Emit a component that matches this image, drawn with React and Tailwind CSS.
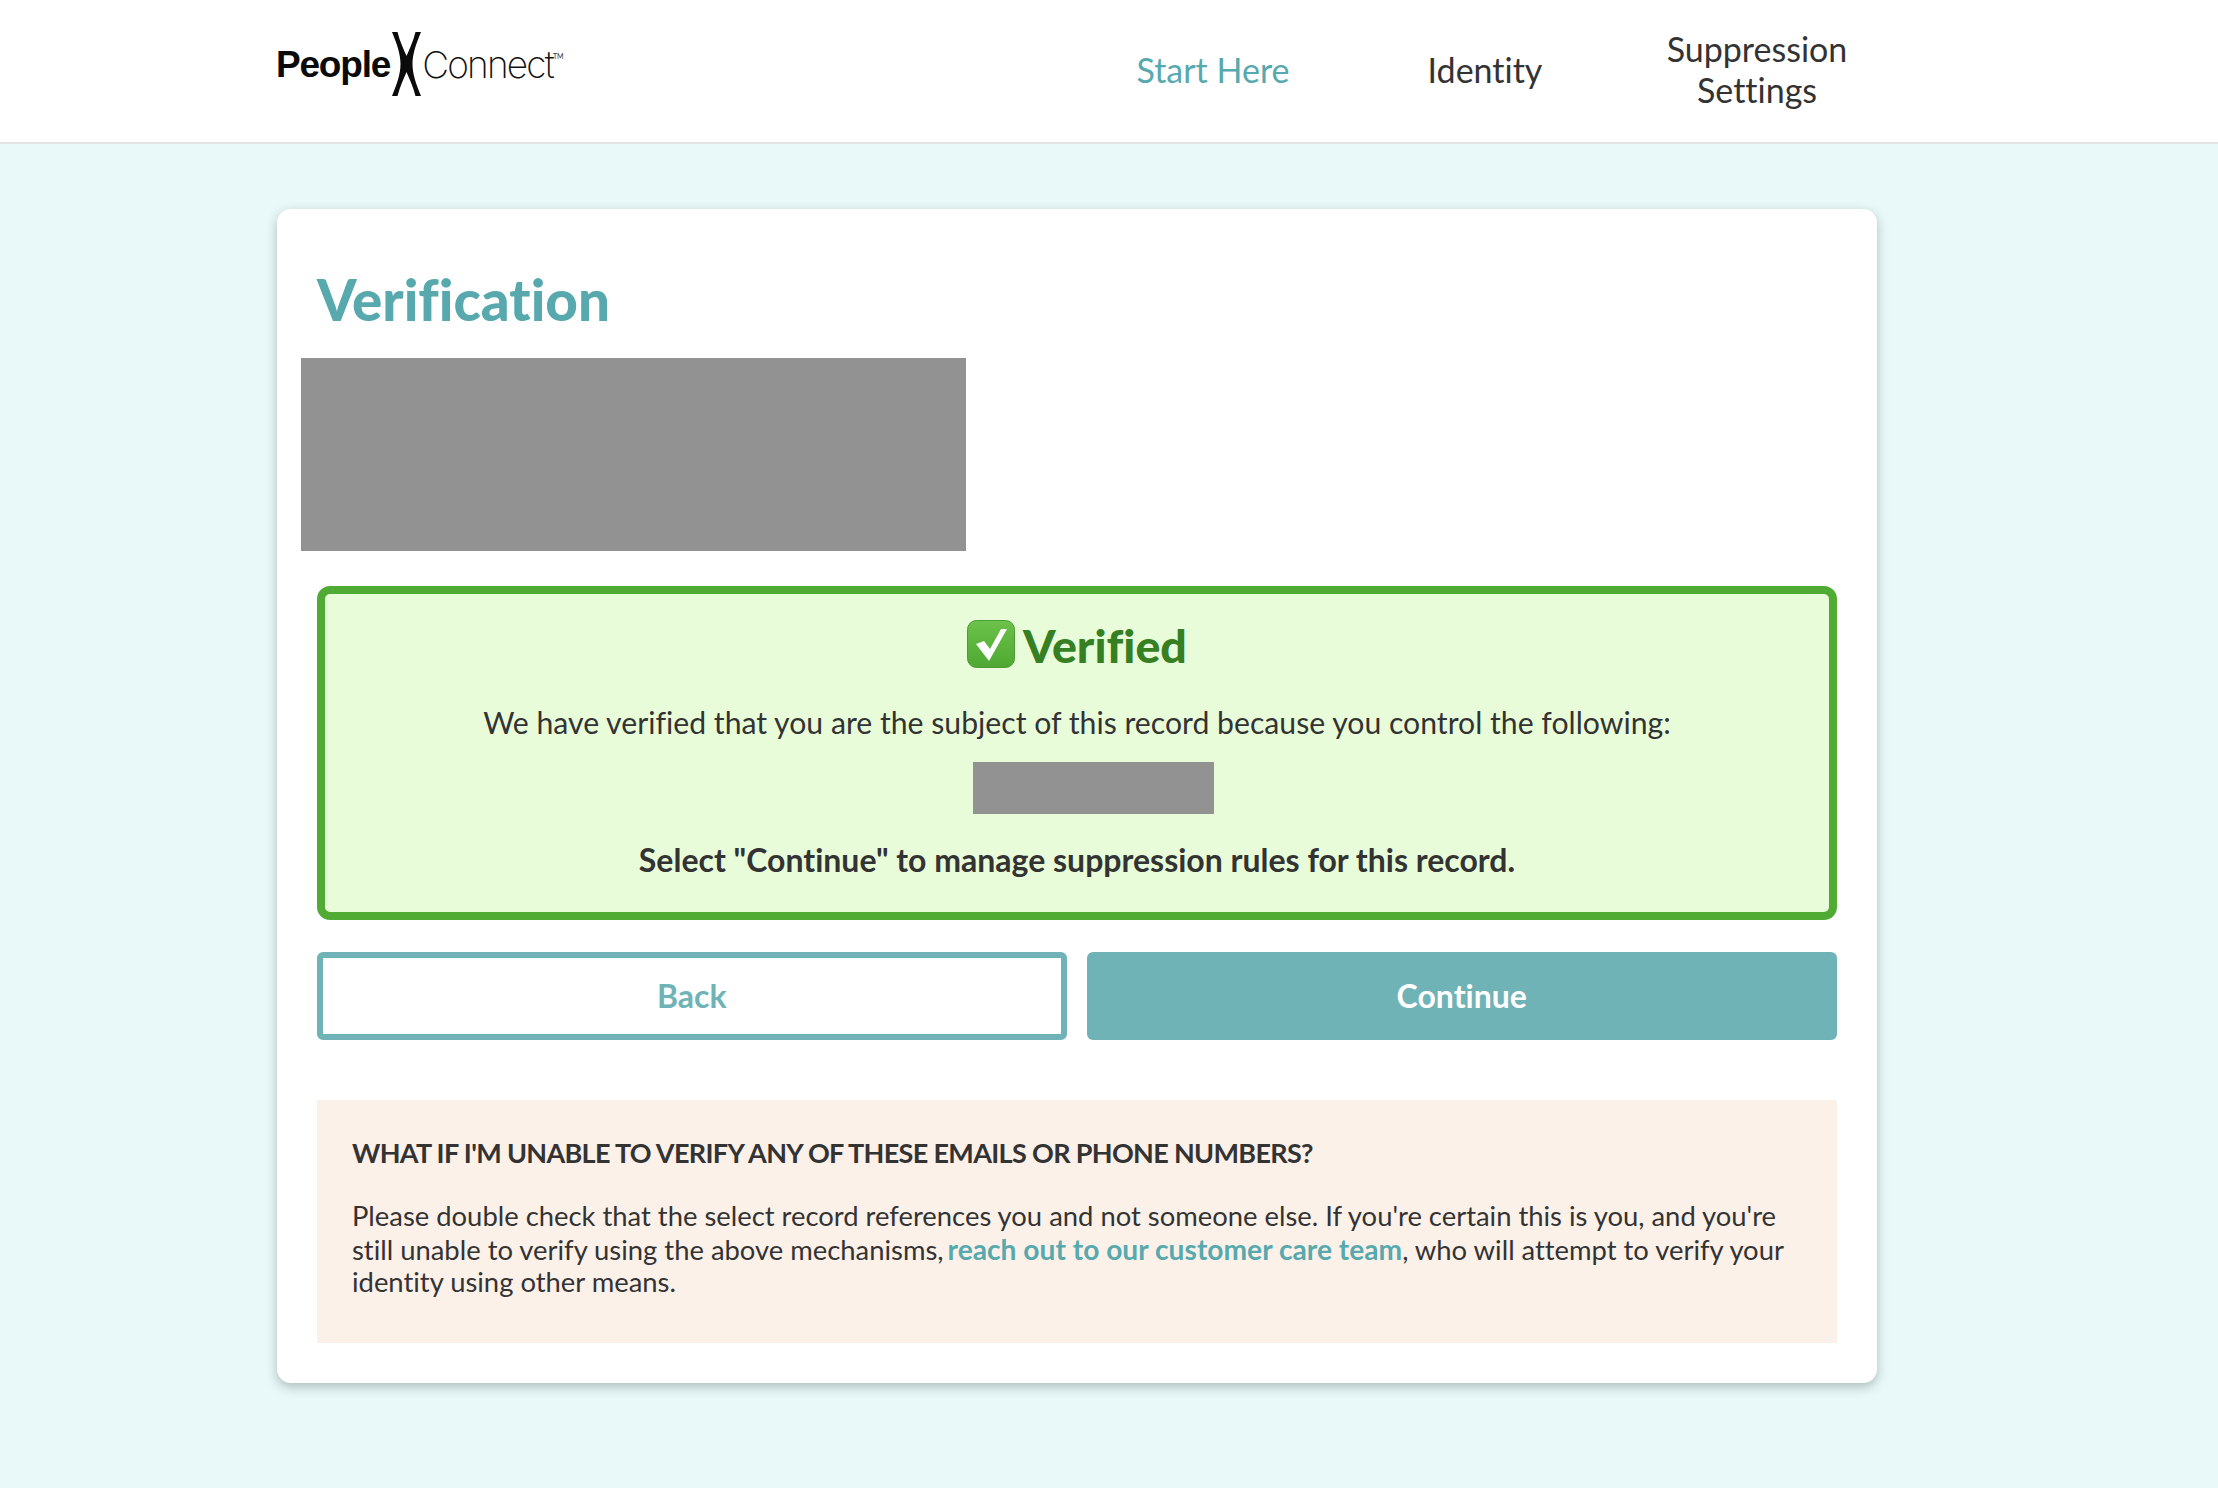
import React from "react";

const LogoX = () => (
  <svg width="29" height="64" viewBox="0 0 29 64" className="shrink-0">
    <path d="M0 0H5.500C8 10 12 18 14.500 24 17 18 21 10 23.500 0H29C24 12 20.500 22 20.500 32 20.500 42 24 52 29 64H23.500C21 54 17 46 14.500 40 12 46 8 54 5.500 64H0C5 52 8.500 42 8.500 32 8.500 22 5 12 0 0Z" fill="#0b0b0b" />
  </svg>
);

const CheckEmoji = () => (
  <svg width="48" height="48" viewBox="0 0 48 48" className="shrink-0">
    <defs>
      <linearGradient id="checkBg" x1="0" y1="0" x2="0" y2="1">
        <stop offset="0" stopColor="#6cc24a" />
        <stop offset="1" stopColor="#4ea832" />
      </linearGradient>
    </defs>
    <rect x="0.500" y="0.500" width="47" height="47" rx="9" fill="url(#checkBg)" stroke="#4b9c35" />
    <path d="M9 24L17 21L23 29L34 9H40L22 41Z" fill="#fff" />
  </svg>
);

const NavItem = ({ active, children }) => (
  <a className={`w-[272px] text-center text-[34px] leading-[41px] ${active ? "text-[#57a9ae]" : "text-[#333]"}`}>
    {children}
  </a>
);

export default function App() {
  return (
    <div className="min-h-[1488px] bg-[#e9f9f9] font-['Lato',sans-serif] text-[#333] [font-variant-ligatures:none]">
      <header className="h-[144px] bg-white border-b-2 border-[#e2e2e2] pl-[276px] flex items-center">
        <div className="flex items-center w-[801px] -mt-[14px]">
          <span className="font-['Liberation_Sans'] font-bold text-[37px] tracking-[-1.2px] text-[#0b0b0b] leading-none">People</span>
          <span className="ml-[2px]"><LogoX /></span>
          <span className="ml-[1px] font-['Inter'] font-extralight text-[37px] tracking-[-1.8px] text-[#111] leading-none">Connect</span>
          <span className="text-[7px] text-[#333] -mt-[16px]">TM</span>
        </div>
        <nav className="flex items-center -mt-[4px]">
          <NavItem active>Start Here</NavItem>
          <NavItem>Identity</NavItem>
          <NavItem>Suppression<br />Settings</NavItem>
        </nav>
      </header>

      <main className="pt-[65px] pl-[277px]">
        <div className="w-[1600px] h-[1174px] bg-white rounded-[14px] shadow-[0_4px_12px_rgba(0,0,0,0.25)] px-[40px] pb-[40px] pt-[55px]">
          <h1 className="text-[56.500px] leading-[70px] font-black text-[#57a9ae]">Verification</h1>
          <div className="-ml-[16px] mt-[24px] w-[665px] h-[193px] bg-[#929292]" />

          <section className="mt-[35px] h-[334px] border-[8px] border-[#4fab33] rounded-[13px] bg-[#e9fcda] flex flex-col items-center pt-[26px]">
            <div className="flex items-center gap-[8px] h-[48px]">
              <CheckEmoji />
              <h2 className="text-[46.500px] leading-[48px] font-black text-[#367f22] mt-[2px]">Verified</h2>
            </div>
            <p className="mt-[34px] text-[30.200px] leading-[40px]">We have verified that you are the subject of this record because you control the following:</p>
            <div className="ml-[33px] mt-[20px] w-[241px] h-[52px] bg-[#929292]" />
            <p className="mt-[26px] text-[32px] leading-[40px] font-bold">Select "Continue" to manage suppression rules for this record.</p>
          </section>

          <div className="mt-[32px] flex gap-[20px]">
            <button className="w-[750px] h-[88px] border-[6px] border-[#6fb3b7] rounded-[6px] bg-white text-[32px] font-bold text-[#6fb3b7]">Back</button>
            <button className="w-[751px] h-[88px] rounded-[6px] bg-[#6fb3b7] text-[32px] font-bold text-white">Continue</button>
          </div>

          <aside className="mt-[60px] h-[243px] bg-[#fbf1e9] px-[35px] pt-[35px]">
            <h3 className="text-[27px] leading-[36px] font-bold tracking-[-0.670px]">WHAT IF I'M UNABLE TO VERIFY ANY OF THESE EMAILS OR PHONE NUMBERS?</h3>
            <p className="mt-[29px] text-[27.400px] leading-[32.500px]">
              Please double check that the select record references you and not someone else. If you're certain this is you, and you're<br />
              still unable to verify using the above mechanisms,<a className="ml-[4px] font-bold text-[28.200px] text-[#57a9ae]">reach out to our customer care team</a>, who will attempt to verify your<br />
              identity using other means.
            </p>
          </aside>
        </div>
      </main>
    </div>
  );
}
